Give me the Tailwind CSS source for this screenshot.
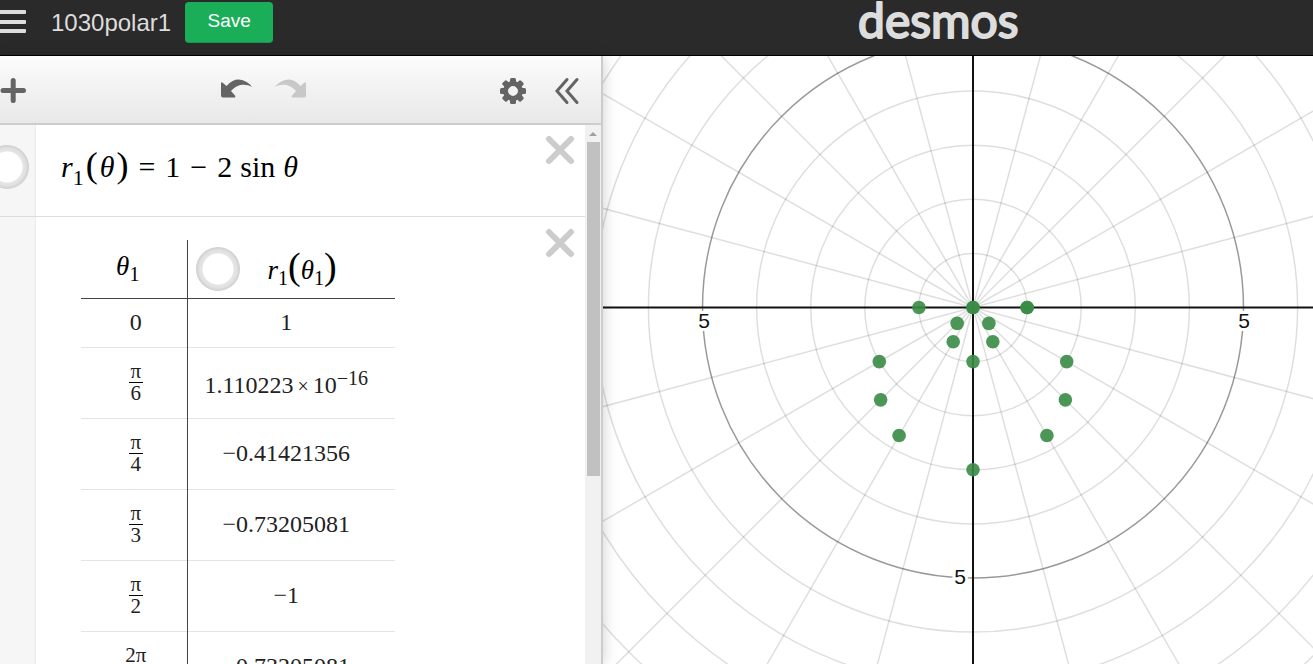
<!DOCTYPE html>
<html lang="en">
<head>
  <meta charset="UTF-8">
  <meta name="viewport" content="width=device-width, initial-scale=1.0">
  <title>1030polar1</title>
  <script src="https://cdn.jsdelivr.net/npm/@tailwindcss/browser@4"></script>
</head>
<body class="flex h-screen flex-col overflow-hidden bg-white font-['Liberation_Sans',sans-serif]">
  <header class="flex h-14 shrink-0 items-start border-b border-black bg-[#2a2a2a]">
    <div class="flex flex-1 items-center pt-0.5">
      <button type="button" aria-label="Open menu" class="mr-6 h-10 w-[27px]">
        <svg class="h-10 w-[27px]" viewBox="0 0 27 40" fill="#ddd">
          <rect x="-4" y="7" width="30" height="4" rx="1"/>
          <rect x="-4" y="17" width="30" height="4" rx="1"/>
          <rect x="-4" y="26" width="30" height="4" rx="1"/>
        </svg>
      </button>
      <h1 class="mr-3.5 text-[24px] leading-10 text-[#ddd]">1030polar1</h1>
      <button type="button" class="h-[41px] w-[88px] rounded border-b border-[#179a4a] bg-[#1bae58] pb-0.5 text-[19px] font-medium text-white">Save</button>
    </div>
    <svg class="mr-[292px] h-14 w-[164px] shrink-0 overflow-visible" viewBox="0 0 164 56">
      <text x="1" y="38" font-family="Lato, sans-serif" font-size="48" fill="#ddd" stroke="#ddd" stroke-width="2" stroke-linejoin="round">desmos</text>
    </svg>
  </header>

  <main class="flex min-h-0 flex-1">
    <section class="relative z-10 flex w-[603px] shrink-0 flex-col border-r-2 border-[#ccc] bg-white shadow-[0_0_14px_rgba(0,0,0,0.2)]">
      <!-- toolbar -->
      <div class="flex h-[69px] shrink-0 items-center border-b-2 border-[#ccc] bg-linear-to-b from-[#fcfcfc] to-[#e8e8e8]">
        <button type="button" aria-label="Add item" class="mr-auto">
          <svg class="size-7" viewBox="0 0 28 28" stroke="#646464" stroke-width="5" stroke-linecap="round">
            <path d="M3 14.500H23.500M13.200 4.500V24.500"/>
          </svg>
        </button>
        <button type="button" aria-label="Undo" class="mr-5">
          <svg class="h-8 w-9" viewBox="0 0 36 32" fill="#646464">
            <path d="M4 9.500Q4 7.500 6 9L9.500 12C15 6 20 4.600 25 6C29.500 7.300 32.500 9.500 35 13C29 9.500 20.500 9.500 14 17L18 21.500Q19 23.500 17 23.500H6Q4 23.500 4 21.500Z"/>
          </svg>
        </button>
        <button type="button" aria-label="Redo" class="mr-auto">
          <svg class="h-8 w-9" viewBox="0 0 36 32" fill="#c8c8c8">
            <path d="M33 9.500Q33 7.500 31 9L27.500 12C22 6 17 4.600 12 6C7.500 7.300 4.500 9.500 2 13C8 9.500 16.500 9.500 23 17L19 21.500Q18 23.500 20 23.500H31Q33 23.500 33 21.500Z"/>
          </svg>
        </button>
        <button type="button" aria-label="Settings" class="mr-6">
          <svg class="size-8" viewBox="-16 -17 32 32">
            <g id="gear" fill="#646464"></g>
          </svg>
        </button>
        <button type="button" aria-label="Hide list" class="mr-5">
          <svg class="h-8 w-7" viewBox="0 0 28 32" fill="none" stroke="#646464" stroke-width="3" stroke-linecap="round">
            <path d="M14 5.500L4 17L14 28.500M24 5.500L14 17L24 28.500"/>
          </svg>
        </button>
      </div>

      <div class="flex min-h-0 flex-1">
        <div class="min-w-0 flex-1 overflow-hidden font-['Liberation_Serif',serif] text-black">
          <!-- expression 1 -->
          <div class="flex h-[92px] border-b border-[#ddd]">
            <div class="flex w-9 shrink-0 justify-end border-r border-[#eaeaea] bg-[#f6f6f6] pt-5 pr-1.5">
              <button type="button" aria-label="Show graph" class="size-11 shrink-0 rounded-full bg-[radial-gradient(circle_closest-side,#fff_15px,#e6e6e6_16px,#e0e0e0_19px,#cdcdcd_22px)]"></button>
            </div>
            <div class="flex flex-1 items-baseline pt-[22px] pl-[25px] text-[30px] leading-9">
              <i>r</i><span class="relative top-2 text-[22px]">1</span>
              <span class="ml-0.5 text-[36px]">(</span><i class="mx-0.5">θ</i><span class="text-[36px]">)</span>
              <span class="ml-2.5">=</span><span class="ml-2.5">1</span><span class="ml-2.5">−</span><span class="ml-2.5">2</span>
              <span class="ml-2">sin</span><i class="ml-2">θ</i>
            </div>
            <button type="button" aria-label="Delete expression" class="mr-2.5 h-12 w-8 shrink-0">
              <svg class="h-12 w-8" viewBox="0 0 32 48" stroke="#ccc" stroke-width="6" stroke-linecap="round"><path d="M6 14L28 36M28 14L6 36"/></svg>
            </button>
          </div>

          <!-- table -->
          <div class="flex">
            <div class="h-[600px] w-9 shrink-0 border-r border-[#eaeaea] bg-[#f6f6f6]"></div>
            <div class="flex-1 pt-[23px] pl-[45px]">
              <table class="w-[314px] table-fixed border-collapse text-center text-[24px] leading-6 text-[#222]">
                <thead>
                  <tr class="h-[58px] border-b border-[#444] text-[27px] text-black">
                    <th class="w-[106px] border-r border-[#444] p-0 pr-3 pb-1 font-normal"><div class="leading-9"><i>θ</i><span class="relative top-1.5 text-[20px]">1</span></div></th>
                    <th class="p-0 font-normal">
                      <div class="flex items-center pl-2">
                        <button type="button" aria-label="Show points" class="mr-7 size-11 shrink-0 rounded-full bg-[radial-gradient(circle_closest-side,#fff_15px,#e6e6e6_16px,#e0e0e0_19px,#cdcdcd_22px)]"></button>
                        <div class="flex items-baseline leading-9"><i>r</i><span class="relative top-1.5 text-[20px]">1</span><span class="text-[38px]">(</span><i>θ</i><span class="relative top-1.5 text-[20px]">1</span><span class="text-[38px]">)</span></div>
                      </div>
                    </th>
                  </tr>
                </thead>
                <tbody id="rows"></tbody>
              </table>
            </div>
            <button type="button" aria-label="Delete table" class="mr-2.5 h-12 w-8 shrink-0">
              <svg class="h-12 w-8" viewBox="0 0 32 48" stroke="#ccc" stroke-width="6" stroke-linecap="round"><path d="M6 15L28 37M28 15L6 37"/></svg>
            </button>
          </div>
        </div>

        <!-- scrollbar -->
        <div class="flex w-4 shrink-0 flex-col items-center bg-[#f1f1f1]">
          <svg class="h-[17px] w-4 shrink-0" viewBox="0 0 16 17" fill="#a0a0a0"><path d="M4 11L8 7L12 11Z"/></svg>
          <div class="h-[62%] w-[13px] bg-[#c1c1c1]"></div>
        </div>
      </div>
    </section>

    <section class="min-w-0 flex-1">
      <svg id="graph" class="h-full w-full" viewBox="0 0 710 608" preserveAspectRatio="xMidYMid slice" role="img" aria-label="Polar graph"></svg>
    </section>
  </main>

  <script>
    // gear icon
    let gear = '';
    for (let i = 0; i < 8; i++) {
      gear += `<rect x="-3" y="-13" width="6" height="8" rx="1.500" transform="rotate(${i * 45})"/>`;
    }
    gear += '<circle r="7.500" fill="none" stroke="#646464" stroke-width="5"/>';
    document.getElementById('gear').innerHTML = gear;

    // table values
    const values = [
      ['0', '', '1'],
      ['π', '6', '<div class="pt-2">1.110223<span class="mx-1 text-[20px]">×</span>10<span class="relative -top-2 text-[20px]">−16</span></div>'],
      ['π', '4', '−0.41421356'],
      ['π', '3', '−0.73205081'],
      ['π', '2', '−1'],
      ['2π', '3', '−0.73205081'],
    ];
    document.getElementById('rows').innerHTML = values.map(([top, bottom, r]) => {
      const angle = bottom
        ? `<span class="inline-flex flex-col align-middle text-[21px] leading-5"><span class="border-b border-black pb-px">${top}</span><span class="px-0.5">${bottom}</span></span>`
        : top;
      return `<tr class="${bottom ? 'h-[71px]' : 'h-[49px]'} border-b border-[#e4e4e4]">
        <td class="border-r border-[#444] p-0 pl-1 ${bottom ? 'pb-0.5' : 'pb-px'} align-middle">${angle}</td>
        <td class="p-0 pr-2.5 ${bottom ? 'pb-0.5' : 'pb-px'} align-middle whitespace-nowrap">${r}</td>
      </tr>`;
    }).join('');

    // polar grid
    const cx = 370, cy = 251.5, unit = 54.1;
    let svg = '';
    for (let n = 1; n <= 13; n++) {
      const major = n % 5 === 0;
      svg += `<circle cx="${cx}" cy="${cy}" r="${n * unit}" fill="none" stroke="#000" stroke-opacity="${major ? 0.4 : 0.13}" stroke-width="1.500"/>`;
    }
    for (let a = 0; a < 360; a += 15) {
      if (a % 90 === 0) continue;
      const t = a * Math.PI / 180;
      svg += `<line x1="${cx}" y1="${cy}" x2="${cx + 800 * Math.cos(t)}" y2="${cy + 800 * Math.sin(t)}" stroke="#000" stroke-opacity="0.13" stroke-width="1.500"/>`;
    }
    svg += `<path d="M0 ${cy}H710M${cx} 0V608" stroke="#111" stroke-width="2"/>`;
    [[101, 272], [641, 272], [357, 528]].forEach(([x, y]) => {
      svg += `<text x="${x}" y="${y}" text-anchor="middle" font-family="Liberation Sans, sans-serif" font-size="21" stroke="#fff" stroke-width="6" paint-order="stroke" fill="#111">5</text>`;
    });

    // points of r = 1 - 2 sin θ
    [0, 2, 3, 4, 6, 8, 9, 10, 12, 14, 15, 16, 18, 20, 21, 22, 24].forEach((k) => {
      const t = k * Math.PI / 12;
      const r = 1 - 2 * Math.sin(t);
      svg += `<circle cx="${cx + unit * r * Math.cos(t)}" cy="${cy - unit * r * Math.sin(t)}" r="6.800" fill="#388c46" fill-opacity="0.9"/>`;
    });
    document.getElementById('graph').innerHTML = svg;
  </script>
</body>
</html>
